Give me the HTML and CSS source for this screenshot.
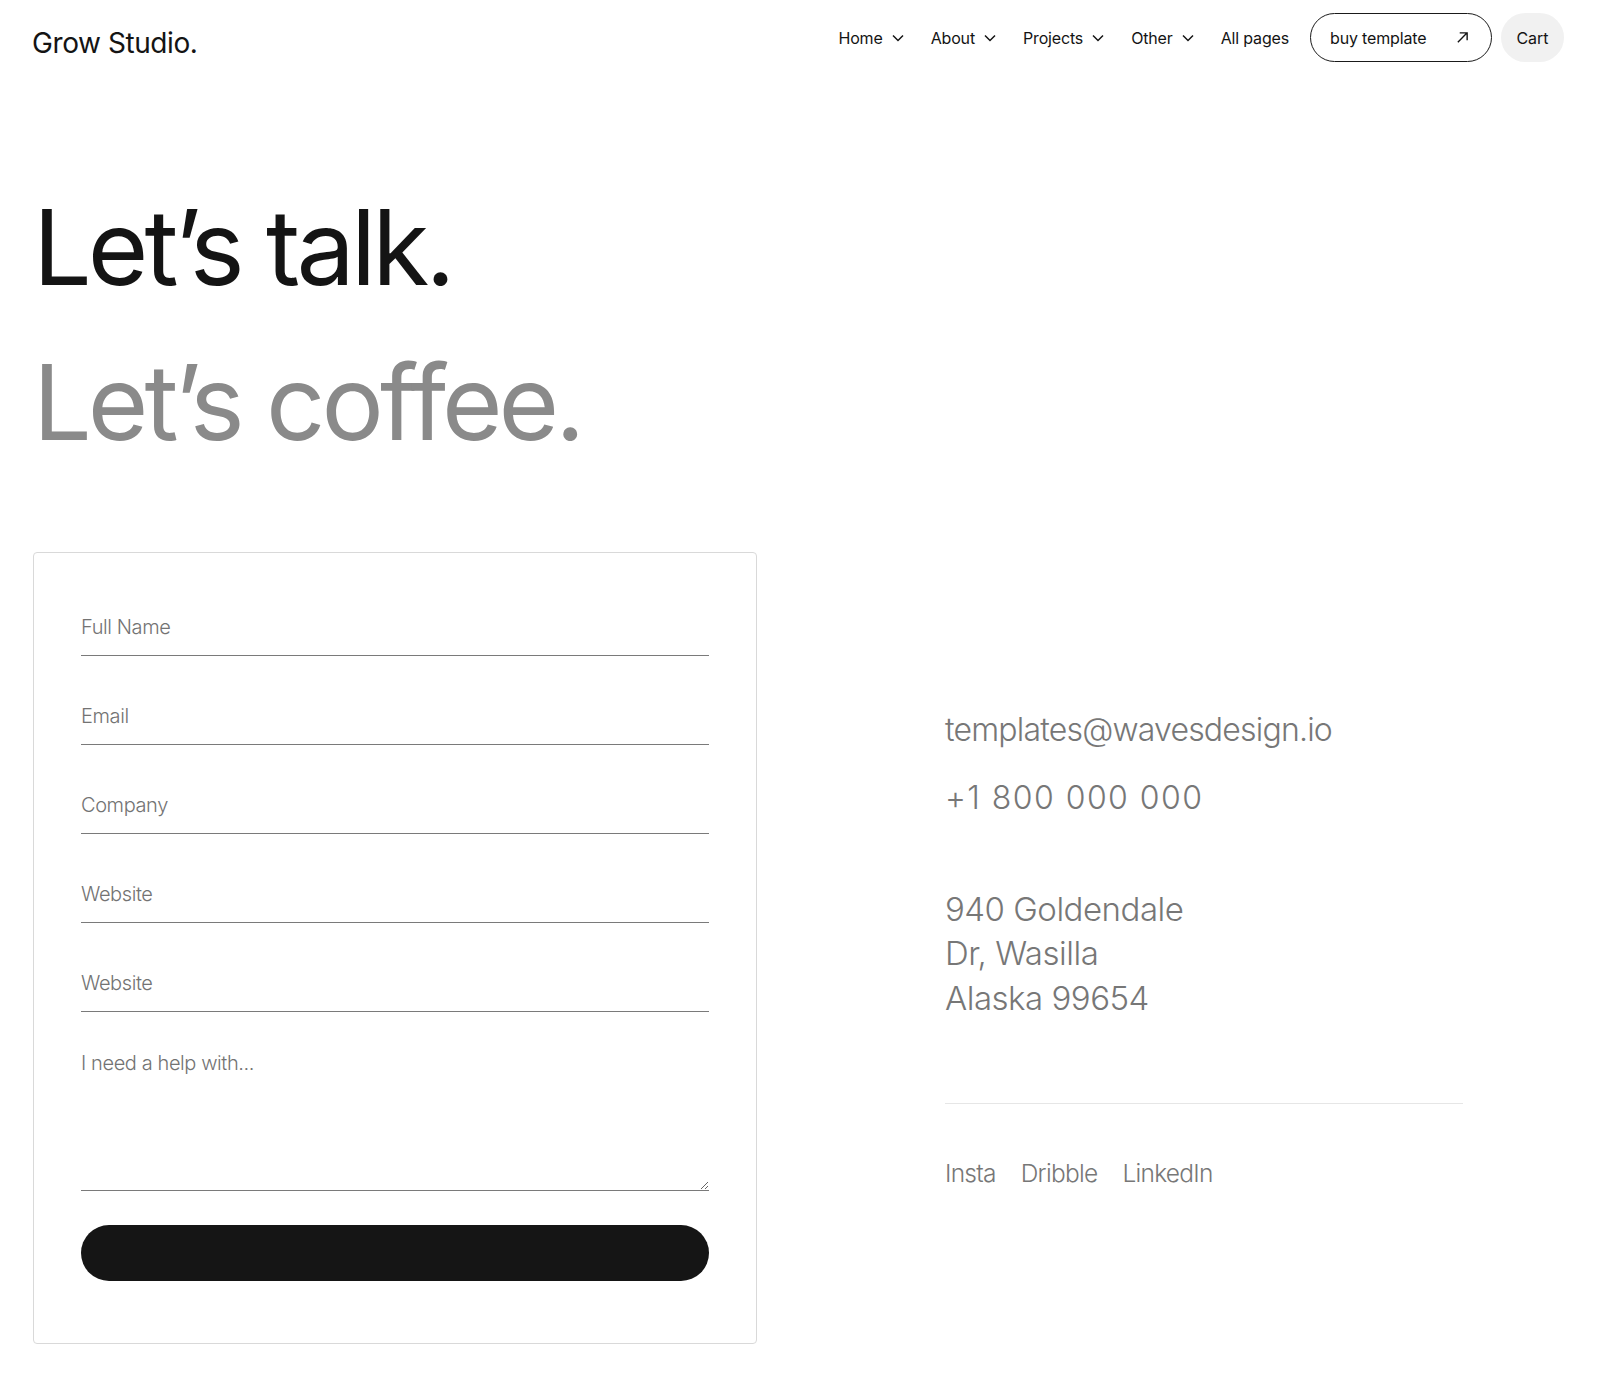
FILE: index.html
```html
<!DOCTYPE html>
<html lang="en">
<head>
<meta charset="utf-8">
<title>Contact — Grow Studio.</title>
<link rel="stylesheet" href="styles.css">
</head>
<body>
<header class="header">
  <a class="logo" href="#">Grow Studio.</a>
  <nav class="nav">
    <ul class="nav-list">
      <li class="nav-item">Home <svg class="chev" viewBox="0 0 12 8"><path d="M1 1.5l5 5 5-5"/></svg></li>
      <li class="nav-item">About <svg class="chev" viewBox="0 0 12 8"><path d="M1 1.5l5 5 5-5"/></svg></li>
      <li class="nav-item">Projects <svg class="chev" viewBox="0 0 12 8"><path d="M1 1.5l5 5 5-5"/></svg></li>
      <li class="nav-item">Other <svg class="chev" viewBox="0 0 12 8"><path d="M1 1.5l5 5 5-5"/></svg></li>
      <li class="nav-item">All pages</li>
    </ul>
    <a class="buy" href="#"><span>buy template</span><svg class="arrow" viewBox="0 0 14 14"><path d="M2 12L12 2M4 2h8v8"/></svg></a>
    <a class="cart" href="#">Cart</a>
  </nav>
</header>

<main class="main">
  <h1 class="title">
    <span class="title-line dark">Let’s talk.</span>
    <span class="title-line light">Let’s coffee.</span>
  </h1>

  <section class="contact">
    <form class="card">
      <input class="field" type="text" placeholder="Full Name">
      <input class="field" type="email" placeholder="Email">
      <input class="field" type="text" placeholder="Company">
      <input class="field" type="text" placeholder="Website">
      <input class="field" type="text" placeholder="Website">
      <textarea class="field area" placeholder="I need a help with..."></textarea>
      <button class="submit" type="button"></button>
    </form>

    <aside class="info">
      <div class="info-line">templates@wavesdesign.io</div>
      <div class="info-line phone">+1 800 000 000</div>
      <address class="address">940 Goldendale<br>Dr, Wasilla<br>Alaska 99654</address>
      <hr class="divider">
      <div class="socials">
        <a href="#">Insta</a>
        <a href="#">Dribble</a>
        <a href="#">LinkedIn</a>
      </div>
    </aside>
  </section>
</main>
</body>
</html>
```

FILE: styles.css
```css
* { box-sizing: border-box; }
html, body { margin: 0; padding: 0; background: #fff; }
body {
  font-family: Inter, "Noto Sans", sans-serif;
  color: #141414;
  -webkit-font-smoothing: antialiased;
}
a { color: inherit; text-decoration: none; }

.header {
  display: flex;
  justify-content: space-between;
  align-items: flex-start;
  padding: 13px 36px 0 32px;
}
.logo {
  font-size: 28px;
  letter-spacing: -0.015em;
  margin-top: 16px;
  line-height: 1;
}
.nav { display: flex; align-items: center; }
.nav-list {
  list-style: none;
  margin: 0;
  padding: 0;
  display: flex;
  gap: 27px;
  font-size: 16px;
  letter-spacing: -0.01em;
}
.nav-item { display: flex; align-items: center; gap: 9px; }
.chev { width: 12px; height: 8px; fill: none; stroke: #141414; stroke-width: 1.5; }
.buy {
  margin-left: 21px;
  height: 49px;
  width: 182px;
  border: 1.5px solid #1a1a1a;
  border-radius: 25px;
  display: flex;
  align-items: center;
  justify-content: space-between;
  padding: 0 22px 0 19px;
  font-size: 16px;
  letter-spacing: -0.01em;
}
.arrow { width: 13px; height: 13px; fill: none; stroke: #141414; stroke-width: 1.5; }
.cart {
  margin-left: 9px;
  height: 49px;
  width: 63px;
  border-radius: 25px;
  background: #f1f1f1;
  display: flex;
  align-items: center;
  justify-content: center;
  font-size: 16px;
}

.main { padding: 0 36px 0 33px; }
.title {
  margin: 108px 0 0 0;
  font-weight: 400;
  font-size: 104px;
  letter-spacing: -0.038em;
  line-height: 155px;
}
.title-line { display: block; }
.dark { color: #141414; }
.light { color: #8a8a8a; }

.contact {
  display: flex;
  align-items: center;
  margin-top: 72px;
}
.card {
  width: 724px;
  border: 1px solid #d9d9d9;
  border-radius: 4px;
  padding: 47px 47px 62px;
  display: flex;
  flex-direction: column;
  gap: 33px;
}
.field {
  font-family: Inter, sans-serif;
  font-weight: 300;
  font-size: 20px;
  letter-spacing: -0.02em;
  color: #141414;
  border: 0;
  border-bottom: 1px solid #7a7a7a;
  height: 56px;
  padding: 0 0 2px;
  outline: none;
  background: transparent;
}
.field::placeholder { color: #737373; }
.area {
  height: 146px;
  padding-top: 6px;
  resize: vertical;
}
.submit {
  margin-top: 1px;
  height: 56px;
  border: 0;
  border-radius: 28px;
  background: #151515;
}

.info {
  margin-left: 188px;
  width: 518px;
  color: #777;
  font-weight: 300;
}
.info-line {
  font-size: 32px;
  letter-spacing: -0.025em;
  line-height: 44px;
}
.phone { margin-top: 24px; letter-spacing: 0.045em; }
.address {
  font-style: normal;
  font-size: 33px;
  letter-spacing: -0.015em;
  line-height: 44.5px;
  margin-top: 67px;
}
.divider {
  border: 0;
  border-top: 1px solid #e6e6e6;
  margin: 83px 0 0;
}
.socials {
  margin-top: 54px;
  display: flex;
  gap: 25px;
  font-size: 24.5px;
  letter-spacing: -0.03em;
}
```
